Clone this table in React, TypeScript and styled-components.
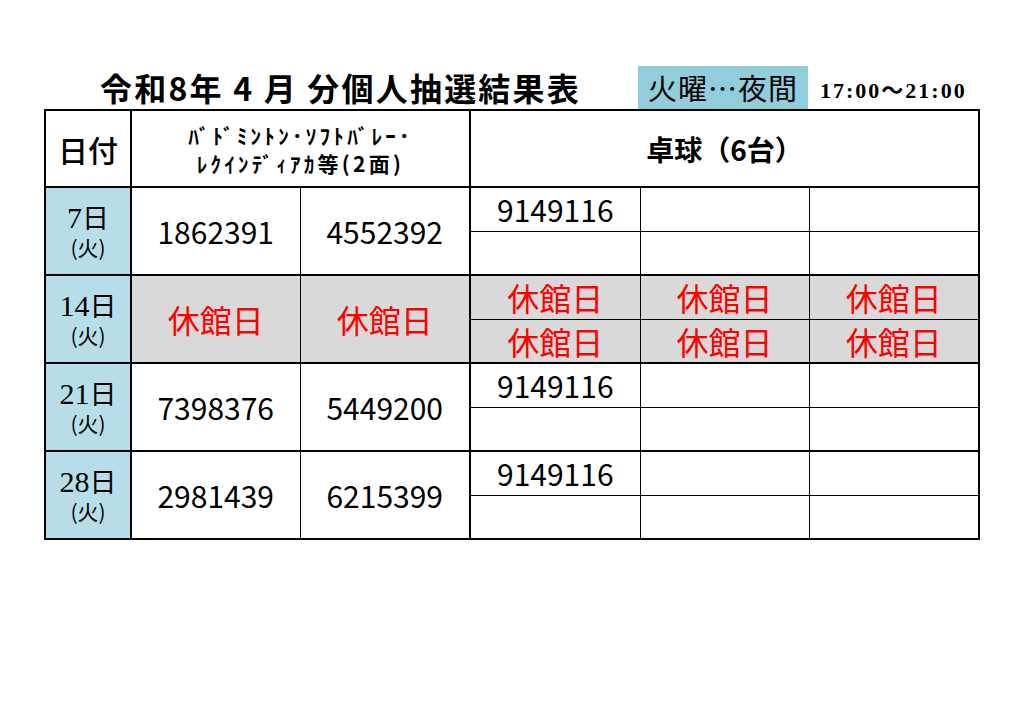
import styled, { createGlobalStyle } from 'styled-components';

const GlobalStyle = createGlobalStyle`
  html, body {
    margin: 0;
    padding: 0;
    background: #ffffff;
  }
  body {
    font-family: "Noto Sans CJK JP", "Noto Sans", sans-serif;
    color: #000000;
  }
`;

const Page = styled.div`
  width: 1024px;
  height: 724px;
  padding: 66px 0 0 44px;
  box-sizing: border-box;
`;

const Header = styled.div`
  display: flex;
  align-items: stretch;
  width: 934px;
  height: 43px;
`;

const Title = styled.h1`
  margin: 0 0 0 56px;
  width: 538px;
  font-size: 32px;
  font-weight: 700;
  line-height: 43px;
  letter-spacing: 2.2px;
  white-space: nowrap;
`;

const Badge = styled.div`
  display: flex;
  align-items: center;
  justify-content: center;
  width: 170px;
  background: #92cddc;
  font-size: 29px;
  letter-spacing: 1px;
  line-height: 1;
`;

const Time = styled.div`
  display: flex;
  align-items: center;
  margin-left: 12px;
  font-family: "Liberation Serif", "Noto Sans CJK JP", serif;
  font-size: 22px;
  font-weight: 700;
  letter-spacing: 2px;
  white-space: nowrap;
`;

const Table = styled.table`
  width: 934px;
  table-layout: fixed;
  border-collapse: collapse;
  border: 2px solid #000;
`;

const HeadCell = styled.th<{ $size: number; $thick?: boolean }>`
  height: 75px;
  padding: 0;
  border: 2px solid #000;
  font-size: ${(p) => p.$size}px;
  font-weight: ${(p) => (p.$thick ? 700 : 500)};
  text-align: center;
  vertical-align: middle;
  white-space: nowrap;
`;

const SubHead = styled.span`
  display: block;
  font-size: 21px;
  font-weight: 700;
  line-height: 28px;
  letter-spacing: 3.3px;
`;

const Row = styled.tr`
  height: 44px;
`;

const DateCell = styled.td`
  padding: 0;
  background: #b7dee8;
  border: 2px solid #000;
  text-align: center;
  vertical-align: middle;
`;

const DayNum = styled.div`
  height: 30px;
  font-size: 27px;
  line-height: 30px;
  span {
    font-family: "Liberation Serif", serif;
    font-size: 30px;
    line-height: 1;
  }
`;

const Weekday = styled.div`
  margin-top: 2px;
  height: 26px;
  font-size: 21px;
  line-height: 26px;
`;

const Cell = styled.td<{ $closed?: boolean; $top?: 'thick' | 'thin'; $rightThick?: boolean; $size?: number }>`
  padding: 0;
  background: ${(p) => (p.$closed ? '#d9d9d9' : '#ffffff')};
  border-left: 1px solid #000;
  border-right: ${(p) => (p.$rightThick ? '2px' : '1px')} solid #000;
  border-top: ${(p) => (p.$top === 'thin' ? '1px' : '2px')} solid #000;
  border-bottom: 1px solid #000;
  color: ${(p) => (p.$closed ? '#ff0000' : '#000000')};
  font-size: ${(p) => p.$size ?? 30}px;
  line-height: 1;
  text-align: center;
  vertical-align: middle;
`;

const CLOSED = '休館日';

type Day = {
  day: string;
  closed?: boolean;
  badminton: [string, string];
  tt: string;
};

const days: Day[] = [
  { day: '7', badminton: ['1862391', '4552392'], tt: '9149116' },
  { day: '14', closed: true, badminton: [CLOSED, CLOSED], tt: CLOSED },
  { day: '21', badminton: ['7398376', '5449200'], tt: '9149116' },
  { day: '28', badminton: ['2981439', '6215399'], tt: '9149116' },
];

const App = () => {
  return (
    <Page>
      <GlobalStyle />
      <Header>
        <Title>令和8年 4 月 分個人抽選結果表</Title>
        <Badge>火曜…夜間</Badge>
        <Time>17:00～21:00</Time>
      </Header>
      <Table>
        <colgroup>
          <col style={{ width: 86 }} />
          <col style={{ width: 169 }} />
          <col style={{ width: 170 }} />
          <col style={{ width: 170 }} />
          <col style={{ width: 169 }} />
          <col style={{ width: 170 }} />
        </colgroup>
        <thead>
          <tr>
            <HeadCell $size={30}>日付</HeadCell>
            <HeadCell $size={21} colSpan={2}>
              <SubHead>ﾊﾞﾄﾞﾐﾝﾄﾝ･ｿﾌﾄﾊﾞﾚｰ･</SubHead>
              <SubHead>ﾚｸｲﾝﾃﾞｨｱｶ等(2面)</SubHead>
            </HeadCell>
            <HeadCell $size={28} $thick colSpan={3}>
              卓球（6台）
            </HeadCell>
          </tr>
        </thead>
        <tbody>
          {days.map((d) => {
            const size = d.closed ? 32 : 30;
            return [
              <Row key={d.day + 'a'}>
                <DateCell rowSpan={2}>
                  <DayNum>
                    <span>{d.day}</span>日
                  </DayNum>
                  <Weekday>(火)</Weekday>
                </DateCell>
                <Cell rowSpan={2} $closed={d.closed} $size={size}>
                  {d.badminton[0]}
                </Cell>
                <Cell rowSpan={2} $closed={d.closed} $size={size} $rightThick>
                  {d.badminton[1]}
                </Cell>
                <Cell $closed={d.closed} $size={size}>
                  {d.tt}
                </Cell>
                <Cell $closed={d.closed} $size={size}>
                  {d.closed ? CLOSED : ''}
                </Cell>
                <Cell $closed={d.closed} $size={size}>
                  {d.closed ? CLOSED : ''}
                </Cell>
              </Row>,
              <Row key={d.day + 'b'}>
                <Cell $closed={d.closed} $size={size} $top="thin">
                  {d.closed ? CLOSED : ''}
                </Cell>
                <Cell $closed={d.closed} $size={size} $top="thin">
                  {d.closed ? CLOSED : ''}
                </Cell>
                <Cell $closed={d.closed} $size={size} $top="thin">
                  {d.closed ? CLOSED : ''}
                </Cell>
              </Row>,
            ];
          })}
        </tbody>
      </Table>
    </Page>
  );
};

export default App;
